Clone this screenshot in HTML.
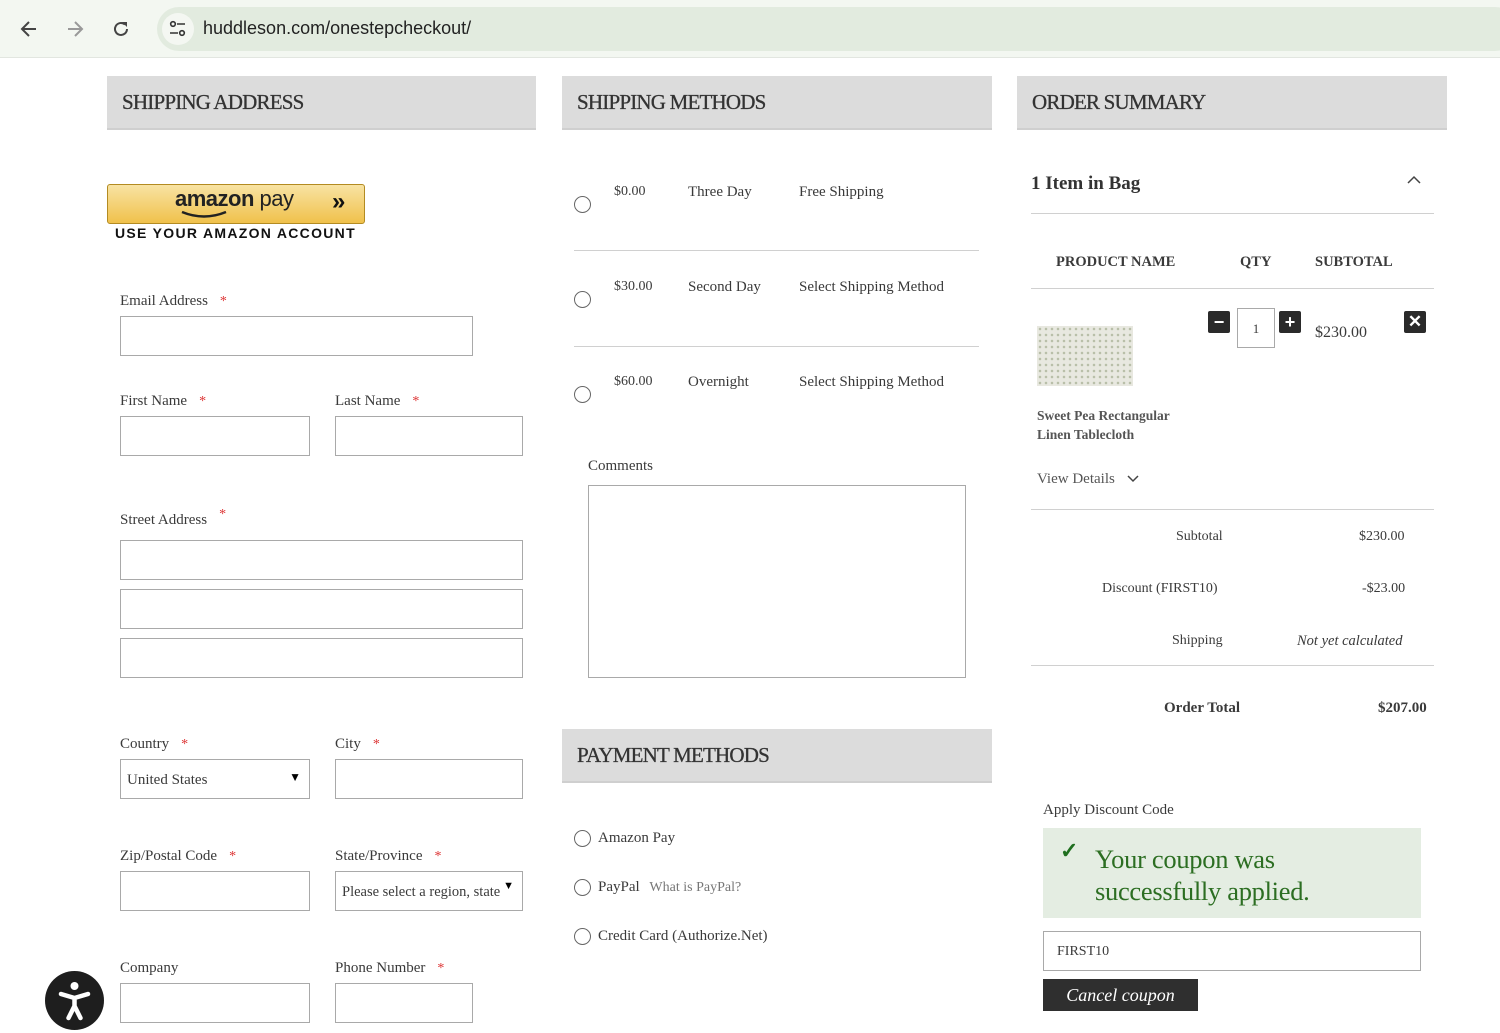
<!DOCTYPE html>
<html><head><meta charset="utf-8"><style>
*{margin:0;padding:0;box-sizing:border-box}
body{width:1500px;height:1033px;overflow:hidden;background:#fff;font-family:"Liberation Serif",serif;color:#3a3a3a;position:relative;font-size:15px}
.a{position:absolute;white-space:nowrap}
.t{margin-top:2px}
.hd{position:absolute;background:#dcdcdc;border-bottom:2px solid #cfcfcf;height:54px;font-size:21px;color:#333;padding:14px 15px;letter-spacing:-.8px;-webkit-text-stroke:.3px #333}
.in{position:absolute;border:1px solid #a9a9a9;height:40px;background:#fff}
.st{color:#d33;font-size:14px;margin-left:12px}
.rad{position:absolute;width:17px;height:17px;border:1.5px solid #666;border-radius:50%}
.hr{position:absolute;height:1px;background:#d0d0d0}
.dk{position:absolute;width:22px;height:22px;background:#2a2a2a;border-radius:2px;color:#fff;text-align:center;font:bold 18px/22px "Liberation Sans",sans-serif}
</style></head><body>
<div class="a" style="left:0;top:0;width:1500px;height:58px;background:#f3f7f1;border-bottom:1px solid #e2e6e0"></div>
<div class="a" style="left:157px;top:7px;width:1360px;height:44px;border-radius:22px;background:#e2ebdf"></div>
<svg class="a" style="left:18px;top:18px" width="22" height="22" viewBox="0 0 22 22"><path d="M18 11H5M11 4l-7 7 7 7" fill="none" stroke="#444" stroke-width="2"/></svg>
<svg class="a" style="left:64px;top:18px" width="22" height="22" viewBox="0 0 22 22"><path d="M4 11h13M11 4l7 7-7 7" fill="none" stroke="#999" stroke-width="2"/></svg>
<svg class="a" style="left:110px;top:18px" width="22" height="22" viewBox="0 0 22 22"><path d="M17 11a6 6 0 1 1-2-4.5" fill="none" stroke="#444" stroke-width="2"/><path d="M12 4h5v5z" fill="#444"/></svg>
<div class="a" style="left:162px;top:13px;width:32px;height:32px;border-radius:16px;background:#f4f7f2"></div>
<svg class="a" style="left:168px;top:19px" width="20" height="20" viewBox="0 0 20 20"><circle cx="5" cy="5" r="2.3" fill="none" stroke="#333" stroke-width="1.6"/><path d="M9 5h8M2 14h8" stroke="#333" stroke-width="1.6"/><circle cx="14" cy="14" r="2.3" fill="none" stroke="#333" stroke-width="1.6"/></svg>
<div class="a" style="left:203px;top:18px;font:18px 'Liberation Sans',sans-serif;color:#222">huddleson.com/onestepcheckout/</div>

<div class="hd" style="left:107px;top:76px;width:429px">SHIPPING ADDRESS</div>
<div class="hd" style="left:562px;top:76px;width:430px">SHIPPING METHODS</div>
<div class="hd" style="left:1017px;top:76px;width:430px">ORDER SUMMARY</div>
<div class="hd" style="left:562px;top:729px;width:430px">PAYMENT METHODS</div>

<div class="a" style="left:107px;top:184px;width:258px;height:40px;border:1px solid #b38b22;border-radius:3px;background:linear-gradient(#f8e3a3,#f0c14b)"></div>
<div class="a" style="left:175px;top:186px;font:bold 22px 'Liberation Sans',sans-serif;color:#222;letter-spacing:-.5px">amazon<span style="font-weight:normal"> pay</span></div>
<svg class="a" style="left:180px;top:210px" width="50" height="10"><path d="M2 2q22 9 44 0" fill="none" stroke="#222" stroke-width="2.5"/></svg>
<div class="a" style="left:332px;top:188px;font:bold 24px 'Liberation Sans',sans-serif;color:#111">»</div>
<div class="a" style="left:115px;top:225px;font:bold 14px 'Liberation Sans',sans-serif;letter-spacing:1.3px;color:#111">USE YOUR AMAZON ACCOUNT</div>

<div class="a t" style="left:120px;top:291px">Email Address<span class="st">*</span></div>
<div class="in" style="left:120px;top:316px;width:353px"></div>
<div class="a t" style="left:120px;top:391px">First Name<span class="st">*</span></div>
<div class="a t" style="left:335px;top:391px">Last Name<span class="st">*</span></div>
<div class="in" style="left:120px;top:416px;width:190px"></div>
<div class="in" style="left:335px;top:416px;width:188px"></div>
<div class="a t" style="left:120px;top:510px">Street Address<span class="st" style="position:relative;top:-6px">*</span></div>
<div class="in" style="left:120px;top:540px;width:403px"></div>
<div class="in" style="left:120px;top:589px;width:403px"></div>
<div class="in" style="left:120px;top:638px;width:403px"></div>
<div class="a t" style="left:120px;top:734px">Country<span class="st">*</span></div>
<div class="a t" style="left:335px;top:734px">City<span class="st">*</span></div>
<div class="in" style="left:120px;top:759px;width:190px;padding:12px 6px">United States<span style="position:absolute;right:8px;top:10px;font-size:12px;color:#000">▼</span></div>
<div class="in" style="left:335px;top:759px;width:188px"></div>
<div class="a t" style="left:120px;top:846px">Zip/Postal Code<span class="st">*</span></div>
<div class="a t" style="left:335px;top:846px">State/Province<span class="st">*</span></div>
<div class="in" style="left:120px;top:871px;width:190px"></div>
<div class="in" style="left:335px;top:871px;width:188px;padding:12px 6px;font-size:14.5px;overflow:hidden;white-space:nowrap">Please select a region, state<span style="position:absolute;right:8px;top:8px;font-size:11px;color:#000">▼</span></div>
<div class="a t" style="left:120px;top:958px">Company</div>
<div class="a t" style="left:335px;top:958px">Phone Number<span class="st">*</span></div>
<div class="in" style="left:120px;top:983px;width:190px"></div>
<div class="in" style="left:335px;top:983px;width:138px"></div>

<div class="a" style="left:45px;top:971px;width:59px;height:59px;border-radius:50%;background:#1e1e1e"></div>
<svg class="a" style="left:45px;top:971px" width="59" height="59" viewBox="0 0 59 59"><circle cx="29.5" cy="15" r="4" fill="#fff"/><path d="M16 23l13.5 4 13.5-4M29.5 27v8M29.5 35l-6 12M29.5 35l6 12" fill="none" stroke="#fff" stroke-width="4.5" stroke-linecap="round" stroke-linejoin="round"/></svg>

<div class="rad" style="left:574px;top:196px"></div>
<div class="a t" style="left:614px;top:182px;font-size:14px">$0.00</div>
<div class="a t" style="left:688px;top:182px">Three Day</div>
<div class="a t" style="left:799px;top:182px">Free Shipping</div>
<div class="hr" style="left:574px;top:250px;width:405px"></div>
<div class="rad" style="left:574px;top:291px"></div>
<div class="a t" style="left:614px;top:277px;font-size:14px">$30.00</div>
<div class="a t" style="left:688px;top:277px">Second Day</div>
<div class="a t" style="left:799px;top:277px">Select Shipping Method</div>
<div class="hr" style="left:574px;top:346px;width:405px"></div>
<div class="rad" style="left:574px;top:386px"></div>
<div class="a t" style="left:614px;top:372px;font-size:14px">$60.00</div>
<div class="a t" style="left:688px;top:372px">Overnight</div>
<div class="a t" style="left:799px;top:372px">Select Shipping Method</div>
<div class="a t" style="left:588px;top:456px">Comments</div>
<div class="in" style="left:588px;top:485px;width:378px;height:193px"></div>

<div class="rad" style="left:574px;top:830px"></div>
<div class="a t" style="left:598px;top:828px">Amazon Pay</div>
<div class="rad" style="left:574px;top:879px"></div>
<div class="a t" style="left:598px;top:877px">PayPal <span style="color:#777;margin-left:6px;font-size:14px">What is PayPal?</span></div>
<div class="rad" style="left:574px;top:928px"></div>
<div class="a t" style="left:598px;top:926px">Credit Card (Authorize.Net)</div>

<div class="a t" style="left:1031px;top:171px;font-size:19px;font-weight:bold;color:#333">1 Item in Bag</div>
<svg class="a" style="left:1407px;top:175px" width="14" height="10"><path d="M1 8l6-6 6 6" fill="none" stroke="#444" stroke-width="1.5"/></svg>
<div class="hr" style="left:1031px;top:213px;width:403px"></div>
<div class="a t" style="left:1056px;top:252px;font-weight:bold;font-size:14.5px">PRODUCT NAME</div>
<div class="a t" style="left:1240px;top:252px;font-weight:bold;font-size:14.5px">QTY</div>
<div class="a t" style="left:1315px;top:252px;font-weight:bold;font-size:14.5px">SUBTOTAL</div>
<div class="hr" style="left:1031px;top:288px;width:403px"></div>
<div class="a" style="left:1037px;top:326px;width:96px;height:60px;background:#e8e8e0;background-image:radial-gradient(#b9bfa9 1.2px,transparent 1.4px);background-size:6px 6px"></div>
<div class="a" style="left:1037px;top:406px;font-size:13.5px;font-weight:bold;color:#555;line-height:19px">Sweet Pea Rectangular<br>Linen Tablecloth</div>
<div class="a t" style="left:1037px;top:469px;color:#555">View Details</div>
<svg class="a" style="left:1127px;top:474px" width="12" height="9"><path d="M1 2l5 5 5-5" fill="none" stroke="#444" stroke-width="1.5"/></svg>
<div class="dk" style="left:1208px;top:311px">−</div>
<div class="in" style="left:1237px;top:308px;width:38px;height:40px;font-size:13px;text-align:center;line-height:40px">1</div>
<div class="dk" style="left:1279px;top:311px">+</div>
<div class="a t" style="left:1315px;top:322px;font-size:16px">$230.00</div>
<div class="dk" style="left:1404px;top:311px;font-size:17px">✕</div>
<div class="hr" style="left:1031px;top:509px;width:403px"></div>
<div class="a t" style="left:1176px;top:527px;font-size:14px">Subtotal</div>
<div class="a t" style="left:1359px;top:527px;font-size:14px">$230.00</div>
<div class="a t" style="left:1102px;top:579px;font-size:14px">Discount (FIRST10)</div>
<div class="a t" style="left:1362px;top:579px;font-size:14px">-$23.00</div>
<div class="a t" style="left:1172px;top:631px;font-size:14px">Shipping</div>
<div class="a t" style="left:1297px;top:631px;font-size:14.5px;font-style:italic">Not yet calculated</div>
<div class="hr" style="left:1031px;top:665px;width:403px"></div>
<div class="a t" style="left:1164px;top:698px;font-weight:bold">Order Total</div>
<div class="a t" style="left:1378px;top:698px;font-weight:bold">$207.00</div>

<div class="a t" style="left:1043px;top:800px">Apply Discount Code</div>
<div class="a" style="left:1043px;top:828px;width:378px;height:90px;background:#e4ede2"></div>
<div class="a" style="left:1060px;top:838px;color:#1f6f1f;font-size:22px;font-weight:bold">✓</div>
<div class="a" style="left:1095px;top:843px;color:#2c6e22;font-size:26.5px;line-height:32px;letter-spacing:-.3px">Your coupon was<br>successfully applied.</div>
<div class="in" style="left:1043px;top:931px;width:378px;height:40px;font-size:14px;padding:12px 13px">FIRST10</div>
<div class="a" style="left:1043px;top:979px;width:155px;height:32px;background:#2f2f2f;color:#fff;font-style:italic;font-size:18px;text-align:center;line-height:32px">Cancel coupon</div>
</body></html>
